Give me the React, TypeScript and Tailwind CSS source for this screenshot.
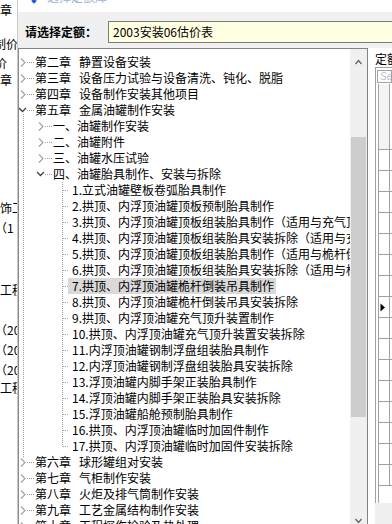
import React from 'react';

type Node = {
  lvl: 1 | 2 | 3;
  a?: string;
  b: string;
  st?: 'c' | 'e';
  last?: boolean;
  sel?: boolean;
  topLine?: boolean;
};

const rows: Node[] = [
  { lvl: 1, a: '第二章', b: '静置设备安装', st: 'c' },
  { lvl: 1, a: '第三章', b: '设备压力试验与设备清洗、钝化、脱脂', st: 'c' },
  { lvl: 1, a: '第四章', b: '设备制作安装其他项目', st: 'c' },
  { lvl: 1, a: '第五章', b: '金属油罐制作安装', st: 'e' },
  { lvl: 2, b: '一、油罐制作安装', st: 'c' },
  { lvl: 2, b: '二、油罐附件', st: 'c' },
  { lvl: 2, b: '三、油罐水压试验', st: 'c' },
  { lvl: 2, b: '四、油罐胎具制作、安装与拆除', st: 'e' },
  { lvl: 3, b: '1.立式油罐壁板卷弧胎具制作' },
  { lvl: 3, b: '2.拱顶、内浮顶油罐顶板预制胎具制作' },
  { lvl: 3, b: '3.拱顶、内浮顶油罐顶板组装胎具制作（适用与充气顶升）' },
  { lvl: 3, b: '4.拱顶、内浮顶油罐顶板组装胎具安装拆除（适用与充气顶升）' },
  { lvl: 3, b: '5.拱顶、内浮顶油罐顶板组装胎具制作（适用与桅杆倒装）' },
  { lvl: 3, b: '6.拱顶、内浮顶油罐顶板组装胎具安装拆除（适用与桅杆倒装）' },
  { lvl: 3, b: '7.拱顶、内浮顶油罐桅杆倒装吊具制作', sel: true },
  { lvl: 3, b: '8.拱顶、内浮顶油罐桅杆倒装吊具安装拆除' },
  { lvl: 3, b: '9.拱顶、内浮顶油罐充气顶升装置制作' },
  { lvl: 3, b: '10.拱顶、内浮顶油罐充气顶升装置安装拆除' },
  { lvl: 3, b: '11.内浮顶油罐钢制浮盘组装胎具制作' },
  { lvl: 3, b: '12.内浮顶油罐钢制浮盘组装胎具安装拆除' },
  { lvl: 3, b: '13.浮顶油罐内脚手架正装胎具制作' },
  { lvl: 3, b: '14.浮顶油罐内脚手架正装胎具安装拆除' },
  { lvl: 3, b: '15.浮顶油罐船舱预制胎具制作' },
  { lvl: 3, b: '16.拱顶、内浮顶油罐临时加固件制作' },
  { lvl: 3, b: '17.拱顶、内浮顶油罐临时加固件安装拆除', last: true },
  { lvl: 1, a: '第六章', b: '球形罐组对安装', st: 'c', topLine: true },
  { lvl: 1, a: '第七章', b: '气柜制作安装', st: 'c' },
  { lvl: 1, a: '第八章', b: '火炬及排气筒制作安装', st: 'c' },
  { lvl: 1, a: '第九章', b: '工艺金属结构制作安装', st: 'c' },
  { lvl: 1, a: '第十章', b: '工程探伤检验及热处理', st: 'c' },
];

const DOT = { stroke: '#a0a0a0', strokeWidth: 1, strokeDasharray: '1 1' };

function Chevron({ x, st }: { x: number; st: 'c' | 'e' }) {
  if (st === 'c') {
    return (
      <polyline
        points={`${x},4.5 ${x + 4},8.5 ${x},12.5`}
        fill="none"
        stroke="#a6a6a6"
        strokeWidth={1.3}
      />
    );
  }
  return (
    <polyline
      points={`${x - 2},6 ${x + 1.5},9.5 ${x + 5},6`}
      fill="none"
      stroke="#404040"
      strokeWidth={1.3}
    />
  );
}

function Gutter({ n }: { n: Node }) {
  const c = 8.5;
  if (n.lvl === 1) {
    return (
      <svg width={16} height={16} className="shrink-0">
        {n.st && <Chevron x={2} st={n.st} />}
        <line x1={8} x2={16} y1={c} y2={c} {...DOT} />
        {n.st === 'e' && <line x1={4.5} x2={4.5} y1={12} y2={16} {...DOT} />}
        {n.topLine && <line x1={4.5} x2={4.5} y1={0} y2={4} {...DOT} />}
      </svg>
    );
  }
  if (n.lvl === 2) {
    return (
      <svg width={34} height={16} className="shrink-0">
        <line x1={4.5} x2={4.5} y1={0} y2={16} {...DOT} />
        {n.st && <Chevron x={20} st={n.st} />}
        <line x1={26} x2={34} y1={c} y2={c} {...DOT} />
      </svg>
    );
  }
  return (
    <svg width={49} height={16} className="shrink-0">
      <line x1={4.5} x2={4.5} y1={0} y2={16} {...DOT} />
      <line x1={43.5} x2={43.5} y1={0} y2={n.last ? c : 16} {...DOT} />
      <line x1={44} x2={50} y1={c} y2={c} {...DOT} />
    </svg>
  );
}

function TreeRow({ n }: { n: Node }) {
  return (
    <div className="h-[16px] flex items-center whitespace-nowrap">
      <Gutter n={n} />
      {n.lvl === 1 ? (
        <span className="leading-[16px]">
          <span>{n.a}</span>
          <span className="ml-[8px]">{n.b}</span>
        </span>
      ) : n.lvl === 2 ? (
        <span className="leading-[16px]">{n.b}</span>
      ) : (
        <span className={`leading-[16px] pl-[4px] pr-[2px] ${n.sel ? 'bg-[#d9d9d9]' : ''}`}>{n.b}</span>
      )}
    </div>
  );
}

function Tree() {
  return (
    <div className="w-[350px] h-[486px] shrink-0 flex border-l border-t border-r border-l-[#8a8a8a] border-t-[#828282] border-r-[#828282] bg-white">
      <div className="w-[331px] h-full overflow-hidden pt-[5px]">
        {rows.map((n, i) => (
          <TreeRow key={i} n={n} />
        ))}
      </div>
      <div className="w-[17px] h-full flex flex-col bg-[#f0f0f0]">
        <div className="h-[20px] shrink-0">
          <svg width={17} height={20}>
            <polyline points="5.5,15 8.5,11.5 11.5,15" fill="none" stroke="#606060" strokeWidth={1.2} />
          </svg>
        </div>
        <div className="flex-1 min-h-0">
          <div className="mt-[68px] ml-[1px] w-[15px] h-[280px] bg-[#cdcdcd]" />
        </div>
        <div className="h-[20px] shrink-0">
          <svg width={17} height={20}>
            <polyline points="5.5,5 8.5,8.5 11.5,5" fill="none" stroke="#606060" strokeWidth={1.2} />
          </svg>
        </div>
      </div>
    </div>
  );
}

function GridRow({ marker }: { marker?: boolean }) {
  return (
    <div className="flex h-[21px] shrink-0">
      <div className="w-[2px] shrink-0" />
      <div className="w-[12px] shrink-0 border-l border-r border-b border-[#a0a0a0] bg-white flex items-center">
        {marker && (
          <svg width={8} height={9} className="ml-[1px]">
            <polygon points="0.5,0.5 5,4.5 0.5,8.5" fill="#000" />
          </svg>
        )}
      </div>
      <div className="flex-1 border-b border-[#a0a0a0]" />
    </div>
  );
}

function RightPanel() {
  return (
    <div className="flex-1 min-w-0 h-full flex flex-col bg-white">
      <div className="h-[19px] shrink-0 pl-[7px] pt-[4px] leading-[14px] whitespace-nowrap overflow-hidden">定额列表</div>
      <div className="ml-[7px] h-[436px] shrink-0 flex flex-col border-l border-t border-[#a0a0a0] bg-white overflow-hidden">
        <div className="h-[16px] shrink-0 pt-[2px] pl-[1px]">
          <div className="h-[13px] border border-[#a0a0a0] pl-[2px] text-[10px] leading-[11px] italic text-[#b8c0d0] whitespace-nowrap overflow-hidden font-['Liberation_Sans',sans-serif]">
            Search
          </div>
        </div>
        <div className="flex h-[66px] shrink-0">
          <div className="w-[2px] shrink-0" />
          <div className="w-[12px] shrink-0 border-l border-r border-b border-[#a0a0a0] bg-[#f4f4f4]" />
          <div className="flex-1 border-b border-[#a0a0a0]" />
        </div>
        {Array.from({ length: 16 }).map((_, i) => (
          <GridRow key={i} marker={i === 7} />
        ))}
        <div className="flex-1 flex">
          <div className="w-[2px] shrink-0" />
          <div className="w-[12px] shrink-0 border-l border-[#a0a0a0]" />
          <div className="flex-1" />
        </div>
      </div>
      <div className="ml-[7px] flex-1 bg-[#f0f0f0]" />
    </div>
  );
}

function LeftStrip() {
  return (
    <div className="w-[17px] shrink-0 h-full overflow-hidden bg-white flex flex-col whitespace-nowrap leading-[16px]">
      <div className="h-[16px] mt-[2px]">章</div>
      <div className="h-[16px] mt-[18px] -ml-[6px]">制价</div>
      <div className="h-[16px] mt-[3px] -ml-[5px]">价</div>
      <div className="h-[16px] mt-[1px]">章</div>
      <div className="h-[16px] mt-[112px]">饰工</div>
      <div className="h-[16px] mt-[4px] -ml-[5px]">（1（</div>
      <div className="h-[16px] mt-[46px]">工程</div>
      <div className="h-[16px] mt-[24px] -ml-[5px]">（20</div>
      <div className="h-[16px] mt-[4px] -ml-[5px]">（20</div>
      <div className="h-[16px] mt-[4px] -ml-[5px]">（20</div>
      <div className="h-[16px] mt-[2px]">工程</div>
    </div>
  );
}

export default function App() {
  return (
    <div className="w-[392px] h-[524px] overflow-hidden flex bg-white text-black font-['Noto_Sans_CJK_SC','Noto_Sans',sans-serif] text-[12px] leading-[16px]">
      <LeftStrip />
      <div className="flex-1 min-w-0 h-full flex flex-col border-l border-[#c8c8c8]">
        <div className="h-[12px] shrink-0 bg-white flex items-start overflow-hidden pl-[14px]">
          <div className="w-[4px] h-[4px] bg-[#2a5bd7] rotate-45 -mt-[1px]" />
          <div className="ml-[11px] -mt-[10px] text-[#9fb3cf] leading-[14px] whitespace-nowrap">选择定额库</div>
        </div>
        <div className="h-[36px] shrink-0 bg-[#f0f0f0] flex items-start pt-[9px]">
          <div className="w-[90px] shrink-0 pl-[7px] h-[22px] flex items-center font-bold whitespace-nowrap">请选择定额：</div>
          <div className="flex-1 h-[22px] border-y border-l border-[#7a7a7a] bg-[#ffffe1] flex items-center pl-[4px] whitespace-nowrap">
            2003安装06估价表
          </div>
        </div>
        <div className="flex-1 min-h-0 flex bg-[#f0f0f0] overflow-hidden">
          <Tree />
          <RightPanel />
        </div>
      </div>
    </div>
  );
}
